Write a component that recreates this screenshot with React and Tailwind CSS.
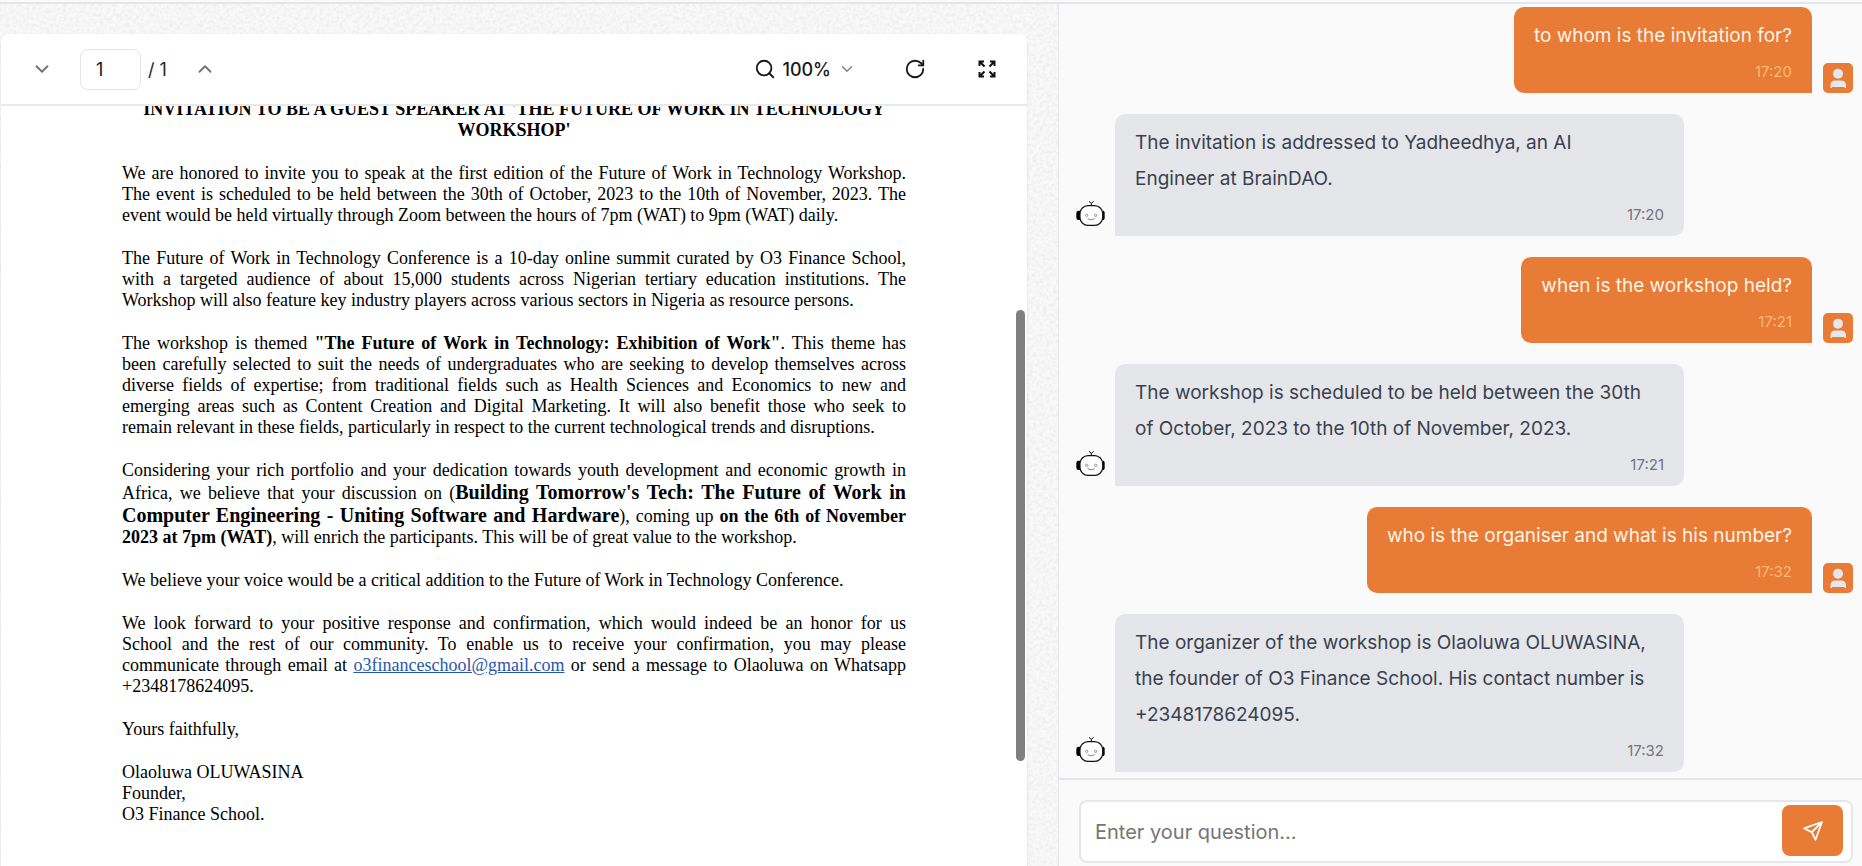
import React from "react";
import { RotateCw, Search, ChevronDown, ChevronUp } from "lucide-react";

const messages = [
  { from: "user", lines: ["to whom is the invitation for?"], time: "17:20" },
  { from: "bot", lines: ["The invitation is addressed to Yadheedhya, an AI", "Engineer at BrainDAO."], time: "17:20" },
  { from: "user", lines: ["when is the workshop held?"], time: "17:21" },
  { from: "bot", lines: ["The workshop is scheduled to be held between the 30th", "of October, 2023 to the 10th of November, 2023."], time: "17:21" },
  { from: "user", lines: ["who is the organiser and what is his number?"], time: "17:32" },
  { from: "bot", lines: ["The organizer of the workshop is Olaoluwa OLUWASINA,", "the founder of O3 Finance School. His contact number is", "+2348178624095."], time: "17:32" },
];

function BotAvatar() {
  return (
    <svg viewBox="0 0 90 90" className="mb-1.5 size-[30px] shrink-0" fill="none" stroke="#111" aria-label="Bot" role="img">
      <path d="M15 32 H11 Q4 32 4 39 V53 Q4 60 11 60 H15 Z M83 32 H86 Q89 34 89 39 V53 Q89 58 86 60 H83 Z" fill="#000" stroke="none" />
      <rect x="15" y="17" width="68" height="59" rx="24" strokeWidth="3.5" fill="#fff" />
      <path d="M49 16 V9 M49 10 L42 4 M49 10 L56 4" strokeWidth="3" />
      <circle cx="35" cy="46" r="3.5" strokeWidth="2" stroke="#666" />
      <circle cx="62" cy="46" r="3.5" strokeWidth="2" stroke="#666" />
      <path d="M38 56 Q49 63 59 56" strokeWidth="2" stroke="#444" />
    </svg>
  );
}

function UserAvatar() {
  return (
    <div className="size-[30px] shrink-0 rounded-[5px] bg-[#e87b35]">
      <svg viewBox="0 0 30 30" fill="#e5e7eb" role="img" aria-label="You">
        <circle cx="15" cy="10.8" r="5" />
        <path d="M7.5 25 V22.5 Q7.5 17.5 12.5 17.5 H18 Q23 17.5 23 22.5 V25 H21.5 V24 H9 V25 Z" />
      </svg>
    </div>
  );
}

function Message({ message }) {
  const user = message.from === "user";
  return (
    <li className={user ? "flex items-end justify-end gap-[11px]" : "flex items-end gap-2.5 pl-2"}>
      {!user && <BotAvatar />}
      <div
        className={
          user
            ? "rounded-[10px] rounded-br-none bg-[#e87b35] px-5 pt-[11px] pb-[11px] text-[#fff3e6]"
            : "w-[569px] rounded-[10px] rounded-bl-none bg-[#e5e6ea] px-5 pt-[11px] pb-[11px] text-[#394150]"
        }
      >
        <p className="text-[19px] leading-9 whitespace-nowrap">
          {message.lines.map((line) => (
            <span key={line} className="block">{line}</span>
          ))}
        </p>
        <time className={user ? "mt-2 block text-right text-[15px] leading-5 text-[#f9b877]" : "mt-2 block text-right text-[15px] leading-5 text-[#70747c]"}>
          {message.time}
        </time>
      </div>
      {user && <UserAvatar />}
    </li>
  );
}

function Para({ children }) {
  return <p className="mb-[22px] text-justify">{children}</p>;
}

function FullLine({ children }) {
  return <span className="block [text-align-last:justify]">{children}</span>;
}

function Letter() {
  return (
    <article className="mx-[121px] -mt-[7px] font-['Liberation_Serif',serif] text-[18px] leading-[21px] text-black">
      <h1 className="mb-[22px] text-center font-bold">
        INVITATION TO BE A GUEST SPEAKER AT 'THE FUTURE OF WORK IN TECHNOLOGY WORKSHOP'
      </h1>
      <Para>
        We are honored to invite you to speak at the first edition of the Future of Work in Technology Workshop. The event is
        scheduled to be held between the 30th of October, 2023 to the 10th of November, 2023. The event would be held virtually
        through Zoom between the hours of 7pm (WAT) to 9pm (WAT) daily.
      </Para>
      <Para>
        The Future of Work in Technology Conference is a 10-day online summit curated by O3 Finance School, with a targeted
        audience of about 15,000 students across Nigerian tertiary education institutions. The Workshop will also feature key
        industry players across various sectors in Nigeria as resource persons.
      </Para>
      <Para>
        <FullLine>
          The workshop is themed <b>"The Future of Work in Technology: Exhibition of Work"</b>. This theme has
        </FullLine>
        <FullLine>been carefully selected to suit the needs of undergraduates who are seeking to develop themselves across</FullLine>
        <FullLine>diverse fields of expertise; from traditional fields such as Health Sciences and Economics to new and</FullLine>
        <FullLine>emerging areas such as Content Creation and Digital Marketing. It will also benefit those who seek to</FullLine>
        remain relevant in these fields, particularly in respect to the current technological trends and disruptions.
      </Para>
      <Para>
        Considering your rich portfolio and your dedication towards youth development and economic growth in Africa, we believe
        that your discussion on (
        <b className="text-[20px] leading-[22px]">
          Building Tomorrow's Tech: The Future of Work in Computer Engineering - Uniting Software and Hardware
        </b>
        ), coming up <b>on the 6th of November 2023 at 7pm (WAT)</b>, will enrich the participants. This will be of great value
        to the workshop.
      </Para>
      <Para>We believe your voice would be a critical addition to the Future of Work in Technology Conference.</Para>
      <Para>
        <FullLine>We look forward to your positive response and confirmation, which would indeed be an honor for us</FullLine>
        <FullLine>School and the rest of our community. To enable us to receive your confirmation, you may please</FullLine>
        communicate through email at{" "}
        <a href="mailto:o3financeschool@gmail.com" className="text-[#2a56ad] underline">o3financeschool@gmail.com</a> or send a
        message to Olaoluwa on Whatsapp +2348178624095.
      </Para>
      <Para>Yours faithfully,</Para>
      <p>
        Olaoluwa OLUWASINA
        <br />
        Founder,
        <br />
        O3 Finance School.
      </p>
    </article>
  );
}

function ExpandIcon() {
  return (
    <svg viewBox="0 0 18 18" className="size-[18px]" fill="none" stroke="#111" strokeWidth="2">
      <path d="M1.5 6 V1.5 H6 M1.5 1.5 L6.5 6.5 M12 1.5 H16.5 V6 M16.5 1.5 L11.5 6.5 M1.5 12 V16.5 H6 M1.5 16.5 L6.5 11.5 M12 16.5 H16.5 V12 M16.5 16.5 L11.5 11.5" />
    </svg>
  );
}

function Toolbar() {
  return (
    <div className="relative z-10 flex h-[72px] shrink-0 items-center justify-between rounded-t-lg border-b-2 border-[#e9e9eb] bg-white pr-[31px] pl-[30px] text-[18px] text-zinc-800">
      <div className="flex items-center">
        <button aria-label="Next page" className="text-zinc-500"><ChevronDown size={22} strokeWidth={2} /></button>
        <input
          aria-label="Page number"
          defaultValue="1"
          className="ml-[27px] h-[41px] w-[61px] rounded-lg border border-[#e4e4e7] bg-white pl-[15px] text-[18px] text-zinc-900"
        />
        <span className="ml-[7px] w-[22px] whitespace-nowrap">/ 1</span>
        <button aria-label="Previous page" className="ml-6 text-zinc-500"><ChevronUp size={22} strokeWidth={2} /></button>
      </div>
      <div className="flex items-center">
        <button aria-label="Zoom level" className="flex items-center font-medium text-zinc-900">
          <Search size={22} strokeWidth={2} className="mr-1.5" />
          100%
          <ChevronDown size={18} strokeWidth={1.5} className="ml-[7px] text-zinc-500" />
        </button>
        <button aria-label="Rotate" className="ml-12 text-zinc-900"><RotateCw size={22} strokeWidth={2} /></button>
        <button aria-label="Full screen" className="ml-[52px]"><ExpandIcon /></button>
      </div>
    </div>
  );
}

function PaperTexture() {
  return (
    <svg className="absolute inset-0 size-full" aria-hidden="true">
      <filter id="grain">
        <feTurbulence type="fractalNoise" baseFrequency="0.3" numOctaves="2" />
        <feColorMatrix values="0 0 0 0 0.65  0 0 0 0 0.65  0 0 0 0 0.65  0.7 0 0 0 -0.27" />
      </filter>
      <rect width="100%" height="100%" filter="url(#grain)" />
    </svg>
  );
}

export default function App() {
  return (
    <div className="flex h-screen flex-col overflow-hidden bg-[#fafafa] pt-0.5 font-['Inter',sans-serif]">
      <div className="flex min-h-0 flex-1 border-t-2 border-[#e5e6ea]">
        <main className="relative min-w-0 flex-1 bg-[#f9f9f9] pt-[30px] pr-[31px] pl-px">
          <PaperTexture />
          <section className="relative flex h-full flex-col rounded-t-lg bg-white shadow-sm">
            <Toolbar />
            <div className="min-h-0 flex-1 overflow-hidden">
              <Letter />
            </div>
            <div className="absolute top-[276px] right-0.5 h-[451px] w-[9px] rounded-full bg-[#7f7f7f]" />
          </section>
        </main>
        <aside className="flex w-[804px] shrink-0 flex-col border-l border-[#e5e6ea] bg-[#fafafb]">
          <ul className="flex flex-1 flex-col gap-[21px] pt-[3px] pr-[9px] pl-2">
            {messages.map((m) => (
              <Message key={m.lines[0]} message={m} />
            ))}
          </ul>
          <form className="border-t-2 border-[#e5e6ea] pt-5 pr-[9px] pb-[3px] pl-5" onSubmit={(e) => e.preventDefault()}>
            <div className="flex h-[63px] rounded-lg border-2 border-[#e7e7e9] bg-white pr-2">
              <input
                aria-label="Question"
                placeholder="Enter your question..."
                className="h-full min-w-0 flex-1 bg-transparent pl-3.5 text-[20px] outline-none placeholder:text-[#757575]"
              />
              <button aria-label="Send" className="mt-[3px] flex h-[51px] w-[61px] items-center justify-center rounded-lg bg-[#e87b35]">
                <svg viewBox="0 0 24 24" className="size-6" fill="none" stroke="#fff" strokeWidth="1.8" strokeLinejoin="round">
                  <path d="M21 3 L3 9.3 L10.8 13.1 L14.5 20.8 Z M21 3 L10.8 13.1" />
                </svg>
              </button>
            </div>
          </form>
        </aside>
      </div>
    </div>
  );
}
